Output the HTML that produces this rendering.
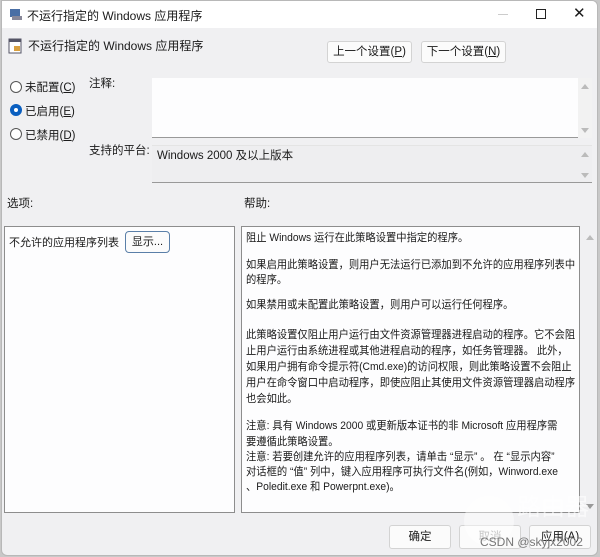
<!DOCTYPE html><html><head><meta charset="utf-8"><style>
*{margin:0;padding:0;box-sizing:border-box}
body{width:600px;height:557px;overflow:hidden;background:#c8c8c8;font-family:"Liberation Sans","Noto Sans CJK SC",sans-serif;color:#1a1a1a;font-size:11.5px}
.win{position:absolute;left:1px;top:0;width:597px;height:556px;background:#f0f0f2;border:1px solid #b8b8b8;border-radius:0 6px 6px 6px;overflow:hidden}
.a{position:absolute;white-space:nowrap}
.btn{position:absolute;background:#fbfbfb;border:1px solid #d3d3d3;border-radius:3px;text-align:center;font-size:11.5px}
.box{position:absolute;background:#fdfdfe;border:1px solid #8d8d8d}
.radio{position:absolute;width:12px;height:12px;border:1px solid #555;border-radius:50%;background:#fff}
.l{position:absolute;left:244px;white-space:nowrap;font-size:11px;line-height:14px;transform:scaleX(0.935);transform-origin:0 0}
.arr{position:absolute;width:0;height:0;border-left:4px solid transparent;border-right:4px solid transparent}
</style></head><body><div class="win">
<div class="a" style="left:0;top:0;width:597px;height:27px;background:#fff"></div>
<svg class="a" style="left:7px;top:6px" width="14" height="14"><rect x="1" y="2" width="10" height="8" fill="#4a6fa5"/><rect x="3" y="9" width="10" height="4" fill="#889"/></svg>
<div class="a" style="left:25px;top:6px;font-size:12px">不运行指定的 Windows 应用程序</div>
<div class="a" style="left:496px;top:13px;width:10px;height:1px;background:#ccc"></div>
<div class="a" style="left:534px;top:8px;width:10px;height:10px;border:1px solid #222"></div>
<div class="a" style="left:571px;top:3px;font-size:15px">✕</div>
<svg class="a" style="left:6px;top:36px" width="14" height="17"><rect x="1" y="2" width="12" height="14" fill="#fff" stroke="#556" /><rect x="1" y="2" width="12" height="3" fill="#556"/><rect x="6" y="9" width="6" height="5" fill="#d9a040"/></svg>
<div class="a" style="left:26px;top:36px;font-size:12px">不运行指定的 Windows 应用程序</div>
<div class="btn" style="left:325px;top:40px;width:85px;height:22px;line-height:20px">上一个设置(<u>P</u>)</div>
<div class="btn" style="left:419px;top:40px;width:85px;height:22px;line-height:20px">下一个设置(<u>N</u>)</div>
<div class="radio" style="left:8px;top:80px"></div><div class="a" style="left:23px;top:78px">未配置(<u>C</u>)</div>
<div class="radio" style="left:8px;top:103px;border:4px solid #0a5fc0"></div><div class="a" style="left:23px;top:102px">已启用(<u>E</u>)</div>
<div class="radio" style="left:8px;top:127px"></div><div class="a" style="left:23px;top:126px">已禁用(<u>D</u>)</div>
<div class="a" style="left:87px;top:74px">注释:</div>
<div class="a" style="left:150px;top:77px;width:440px;height:60px;background:#fdfdfe;border-bottom:1px solid #999"></div>
<div class="a" style="left:576px;top:77px;width:14px;height:60px;background:#f2f2f2"></div>
<div class="arr" style="left:579px;top:83px;border-bottom:5px solid #bbb"></div>
<div class="arr" style="left:579px;top:127px;border-top:5px solid #bbb"></div>
<div class="a" style="left:87px;top:141px">支持的平台:</div>
<div class="a" style="left:150px;top:144px;width:440px;height:38px;background:#eeeef0;border-top:1px solid #e4e4e4;border-bottom:1px solid #999"></div>
<div class="a" style="left:155px;top:146px">Windows 2000 及以上版本</div>
<div class="arr" style="left:579px;top:151px;border-bottom:5px solid #bbb"></div>
<div class="arr" style="left:579px;top:172px;border-top:5px solid #bbb"></div>
<div class="a" style="left:5px;top:194px">选项:</div>
<div class="a" style="left:242px;top:194px">帮助:</div>
<div class="box" style="left:2px;top:225px;width:231px;height:287px"></div>
<div class="a" style="left:7px;top:233px;font-size:11px">不允许的应用程序列表</div>
<div class="btn" style="left:123px;top:230px;width:45px;height:22px;line-height:20px;border:1px solid #5a7fa8;border-radius:4px;font-size:11px">显示...</div>
<div class="box" style="left:239px;top:225px;width:339px;height:287px"></div>
<div class="arr" style="left:584px;top:234px;border-bottom:5px solid #bbb"></div>
<div class="arr" style="left:584px;top:503px;border-top:5px solid #999"></div>
<div class="l" style="top:230px">阻止 Windows 运行在此策略设置中指定的程序。</div>
<div class="l" style="top:257px">如果启用此策略设置，则用户无法运行已添加到不允许的应用程序列表中</div>
<div class="l" style="top:272px">的程序。</div>
<div class="l" style="top:297px">如果禁用或未配置此策略设置，则用户可以运行任何程序。</div>
<div class="l" style="top:327px">此策略设置仅阻止用户运行由文件资源管理器进程启动的程序。它不会阻</div>
<div class="l" style="top:343px">止用户运行由系统进程或其他进程启动的程序，如任务管理器。 此外，</div>
<div class="l" style="top:359px">如果用户拥有命令提示符(Cmd.exe)的访问权限，则此策略设置不会阻止</div>
<div class="l" style="top:375px">用户在命令窗口中启动程序，即使应阻止其使用文件资源管理器启动程序</div>
<div class="l" style="top:391px">也会如此。</div>
<div class="l" style="top:418px">注意: 具有 Windows 2000 或更新版本证书的非 Microsoft 应用程序需</div>
<div class="l" style="top:434px">要遵循此策略设置。</div>
<div class="l" style="top:449px">注意: 若要创建允许的应用程序列表，请单击 “显示” 。 在 “显示内容”</div>
<div class="l" style="top:464px">对话框的 “值” 列中，键入应用程序可执行文件名(例如，Winword.exe</div>
<div class="l" style="top:479px">、Poledit.exe 和 Powerpnt.exe)。</div>
<div class="btn" style="left:387px;top:524px;width:62px;height:24px;line-height:22px">确定</div>
<div class="btn" style="left:457px;top:524px;width:62px;height:24px;line-height:22px;color:#999">取消</div>
<div class="btn" style="left:527px;top:524px;width:62px;height:24px;line-height:22px">应用(A)</div>
<div class="a" style="left:462px;top:495px;width:50px;height:50px;border-radius:50%;background:rgba(255,255,255,.45)"></div>
<div class="a" style="left:515px;top:486px;font-size:24px;color:rgba(255,255,255,.6)">路由器</div>
<div class="a" style="left:478px;top:534px;font-size:12px;color:#777">CSDN @skyjx2002</div>
</div></body></html>
